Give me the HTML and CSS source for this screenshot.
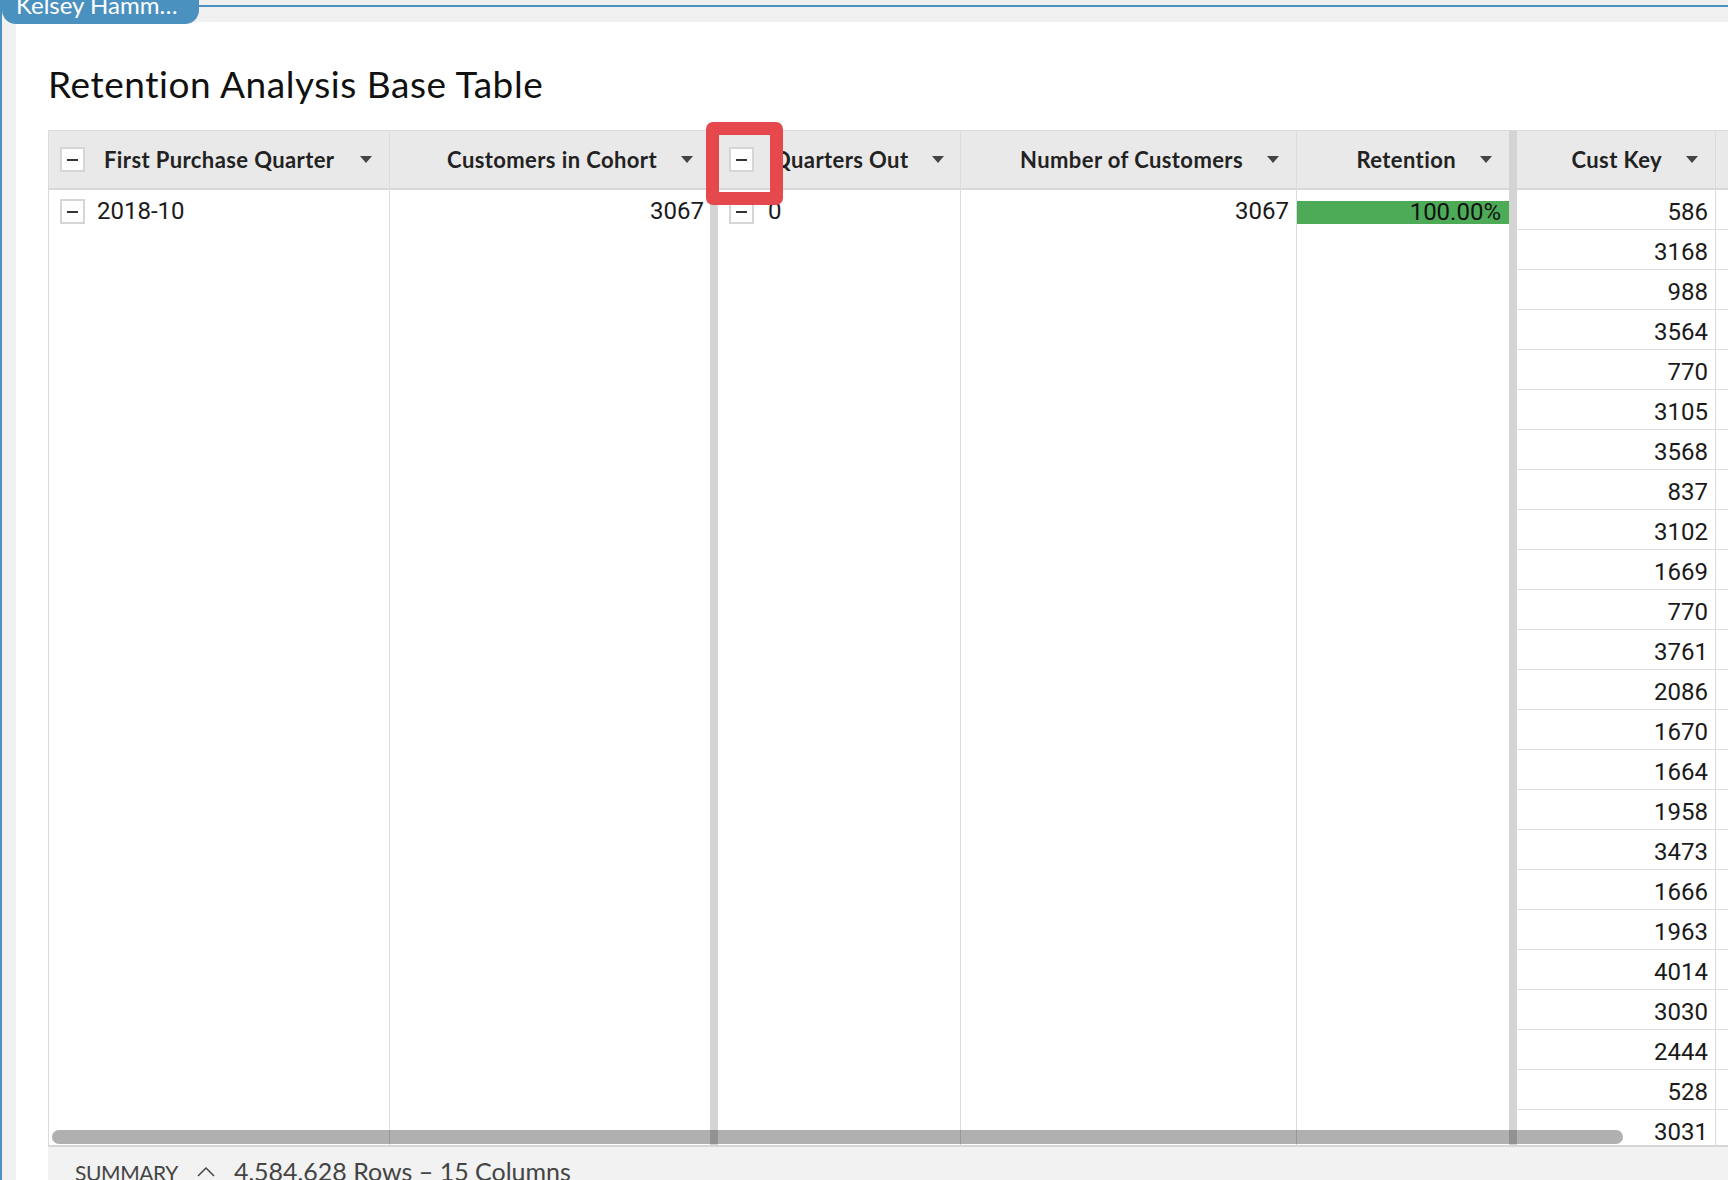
FILE: index.html
```html
<!DOCTYPE html>
<html lang="en">
<head>
<meta charset="utf-8">
<title>Retention Analysis Base Table</title>
<link rel="stylesheet" href="styles.css">
</head>
<body>
<div class="page">
  <div class="topbar">
    <div class="badge">Kelsey Hamm…</div>
    <div class="rule"></div>
  </div>
  <div class="panel">
    <h1 class="title">Retention Analysis Base Table</h1>
    <div class="table">
      <div class="col col1">
        <div class="head left">
          <span class="box"></span>
          <span class="label">First Purchase Quarter</span>
          <span class="caret"></span>
        </div>
        <div class="body">
          <div class="cell left"><span class="box"></span><span class="val">2018-10</span></div>
        </div>
      </div>
      <div class="col col2 noborder">
        <div class="head">
          <span class="label">Customers in Cohort</span>
          <span class="caret"></span>
        </div>
        <div class="body">
          <div class="cell num tight">3067</div>
        </div>
      </div>
      <div class="sep"></div>
      <div class="col col3">
        <div class="head left">
          <span class="box"></span>
          <span class="label">Quarters Out</span>
          <span class="caret"></span>
        </div>
        <div class="body">
          <div class="cell left"><span class="box"></span><span class="val val-gap">0</span></div>
        </div>
      </div>
      <div class="col col4">
        <div class="head">
          <span class="label">Number of Customers</span>
          <span class="caret"></span>
        </div>
        <div class="body">
          <div class="cell num">3067</div>
        </div>
      </div>
      <div class="col col5 noborder">
        <div class="head">
          <span class="label">Retention</span>
          <span class="caret"></span>
        </div>
        <div class="body">
          <div class="cell barcell"><div class="bar">100.00%</div></div>
        </div>
      </div>
      <div class="sep"></div>
      <div class="col col6">
        <div class="head">
          <span class="label">Cust Key</span>
          <span class="caret"></span>
        </div>
        <div class="body">
          <div class="cell num row">586</div>
          <div class="cell num row">3168</div>
          <div class="cell num row">988</div>
          <div class="cell num row">3564</div>
          <div class="cell num row">770</div>
          <div class="cell num row">3105</div>
          <div class="cell num row">3568</div>
          <div class="cell num row">837</div>
          <div class="cell num row">3102</div>
          <div class="cell num row">1669</div>
          <div class="cell num row">770</div>
          <div class="cell num row">3761</div>
          <div class="cell num row">2086</div>
          <div class="cell num row">1670</div>
          <div class="cell num row">1664</div>
          <div class="cell num row">1958</div>
          <div class="cell num row">3473</div>
          <div class="cell num row">1666</div>
          <div class="cell num row">1963</div>
          <div class="cell num row">4014</div>
          <div class="cell num row">3030</div>
          <div class="cell num row">2444</div>
          <div class="cell num row">528</div>
          <div class="cell num row">3031</div>
        </div>
      </div>
      <div class="col col7">
        <div class="head"></div>
        <div class="body">
          <div class="cell row"></div><div class="cell row"></div><div class="cell row"></div><div class="cell row"></div>
          <div class="cell row"></div><div class="cell row"></div><div class="cell row"></div><div class="cell row"></div>
          <div class="cell row"></div><div class="cell row"></div><div class="cell row"></div><div class="cell row"></div>
          <div class="cell row"></div><div class="cell row"></div><div class="cell row"></div><div class="cell row"></div>
          <div class="cell row"></div><div class="cell row"></div><div class="cell row"></div><div class="cell row"></div>
          <div class="cell row"></div><div class="cell row"></div><div class="cell row"></div><div class="cell row"></div>
        </div>
      </div>
      <div class="scrollbar"></div>
      <div class="highlight"></div>
    </div>
    <div class="footer">
      <span class="sum">SUMMARY</span>
      <svg class="chev" width="18" height="11" viewBox="0 0 18 11"><path d="M1 10 L9 2 L17 10" fill="none" stroke="#444" stroke-width="1.5"/></svg>
      <span class="count">4,584,628 Rows – 15 Columns</span>
    </div>
  </div>
</div>
</body>
</html>
```

FILE: styles.css
```css
html, body {
  margin: 0;
  padding: 0;
}
body {
  background: #f0f0f0;
  font-family: Lato, "Liberation Sans", sans-serif;
  color: #1a1a1a;
}
.page {
  height: 1180px;
  border-left: 2px solid #4b91c0;
  background: #f0f0f0;
  display: flex;
  flex-direction: column;
  overflow: hidden;
}
.topbar {
  height: 22px;
  display: flex;
  align-items: flex-start;
  flex: none;
}
.badge {
  position: relative;
  z-index: 2;
  margin-top: -10px;
  height: 34px;
  width: 197px;
  box-sizing: border-box;
  padding: 2px 0 0 14px;
  background: #4b91c0;
  color: #fff;
  font-size: 24px;
  line-height: 26px;
  letter-spacing: 0;
  border-radius: 0 0 14px 14px;
  white-space: nowrap;
  overflow: hidden;
}
.rule {
  flex: 1;
  height: 2px;
  margin-top: 5px;
  background: #4b91c0;
}
.panel {
  flex: 1;
  margin-left: 14px;
  background: #fff;
  padding-left: 32px;
  display: flex;
  flex-direction: column;
  overflow: hidden;
  min-height: 0;
}
.title {
  margin: 40px 0 24px 0;
  height: 44px;
  font-size: 37px;
  line-height: 44px;
  letter-spacing: 0.55px;
  font-weight: 400;
  color: #111;
  white-space: nowrap;
}
.table {
  position: relative;
  flex: none;
  height: 1015px;
  box-sizing: border-box;
  display: flex;
  border-top: 1px solid #dadada;
  border-left: 1px solid #dadada;
}
.col {
  flex: none;
  display: flex;
  flex-direction: column;
  box-sizing: border-box;
  border-right: 1px solid #dcdcdc;
  overflow: hidden;
}
.col.noborder { border-right: none; }
.col1 { width: 341px; }
.col2 { width: 320px; }
.col3 { width: 243px; }
.col4 { width: 336px; }
.col5 { width: 212px; }
.col6 { width: 199px; }
.col7 { width: 300px; }
.sep {
  flex: none;
  width: 8px;
  background: #d4d4d4;
}
.head {
  flex: none;
  height: 57px;
  background: #e9e9e9;
  border-bottom: 2px solid #d8d8d8;
  display: flex;
  align-items: center;
  padding: 0 17px 0 11px;
  font-weight: 700;
  font-size: 22px;
  letter-spacing: 0.4px;
  color: #222;
  white-space: nowrap;
}
.head .label {
  flex: 1;
  text-align: right;
}
.head.left .label {
  text-align: left;
  margin-left: 19px;
}
.caret {
  flex: none;
  margin-left: 24px;
  width: 0;
  height: 0;
  border-left: 6px solid transparent;
  border-right: 6px solid transparent;
  border-top: 7px solid #444;
}
.box {
  flex: none;
  width: 25px;
  height: 25px;
  box-sizing: border-box;
  border: 2px solid #d6d6d6;
  background: #fff;
  position: relative;
}
.box::after {
  content: "";
  position: absolute;
  left: 5px;
  top: 10px;
  width: 11px;
  height: 2px;
  background: #333;
}
.body {
  flex: 1;
  min-height: 0;
  overflow: hidden;
}
.cell {
  height: 39px;
  box-sizing: border-box;
  padding-top: 4px;
  line-height: 35px;
  font-family: Roboto, "Liberation Sans", sans-serif;
  font-size: 24px;
  color: #1a1a1a;
  white-space: nowrap;
}
.cell.row {
  height: 40px;
  line-height: 36px;
  border-bottom: 1px solid #dcdcdc;
}
.cell.num {
  text-align: right;
  padding-right: 7px;
}
.cell.num.tight {
  padding-right: 6px;
}
.cell.left {
  display: flex;
  align-items: center;
  padding-left: 11px;
}
.cell.left .val {
  margin-left: 12px;
}
.cell.left .val.val-gap {
  margin-left: 14px;
}
.barcell {
  padding-top: 11px;
}
.bar {
  height: 23px;
  line-height: 23px;
  background: #4dab57;
  text-align: right;
  padding-right: 8px;
  color: #111;
}
.scrollbar {
  position: absolute;
  left: 3px;
  top: 999px;
  width: 1571px;
  height: 14px;
  border-radius: 7px;
  background: rgba(0, 0, 0, 0.31);
}
.highlight {
  position: absolute;
  left: 657px;
  top: -9px;
  width: 77px;
  height: 83px;
  box-sizing: border-box;
  border: 13px solid #e5484d;
  border-radius: 7px;
}
.footer {
  flex: 1;
  border-top: 2px solid #d6d6d6;
  background: #f2f2f2;
  padding: 9px 0 0 27px;
  display: flex;
  align-items: baseline;
  color: #444;
  white-space: nowrap;
}
.sum {
  font-size: 21px;
  letter-spacing: -0.4px;
  line-height: 30px;
}
.chev {
  margin: 0 19px 0 19px;
  flex: none;
  align-self: flex-start;
  margin-top: 10px;
}
.count {
  font-size: 25px;
  line-height: 30px;
}
</style>
```
